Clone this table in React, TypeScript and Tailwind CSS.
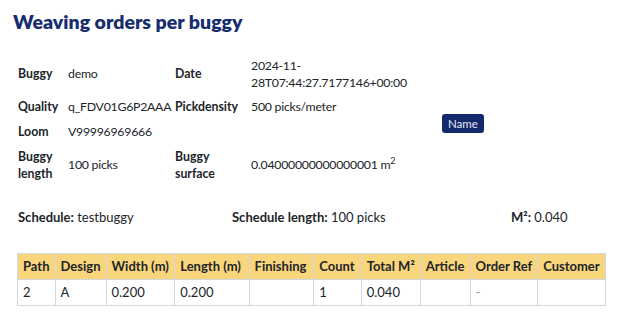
import React from "react";

const cols = [
  { h: "Path", w: 37, v: "2" },
  { h: "Design", w: 51, v: "A" },
  { h: "Width (m)", w: 69, v: "0.200" },
  { h: "Length (m)", w: 76, v: "0.200" },
  { h: "Finishing", w: 66, v: "" },
  { h: "Count", w: 48, v: "1" },
  { h: "Total M²", w: 55, v: "0.040" },
  { h: "Article", w: 50, v: "" },
  { h: "Order Ref", w: 67, v: "-" },
  { h: "Customer", w: 68, v: "" },
];

export default function App() {
  return (
    <div className="w-[619px] h-[325px] bg-white px-[13px] text-[#212529] font-['Lato',sans-serif]">
      <h1 className="pt-[9px] text-[19.5px] leading-[26px] font-extrabold text-[#182d6d]">
        Weaving orders per buggy
      </h1>
      <div className="mt-[18px] ml-[5px] grid grid-cols-[50px_107px_76px_191px_auto] grid-rows-[41px_25px_25px_41px] text-[12.3px] tracking-[-0.25px] leading-[17px]">
        <div className="font-bold tracking-normal self-center">Buggy</div>
        <div className="self-center">demo</div>
        <div className="font-bold tracking-normal self-center">Date</div>
        <div className="self-center">
          2024-11-
          <br />
          28T07:44:27.7177146+00:00
        </div>
        <div />

        <div className="font-bold tracking-normal self-center">Quality</div>
        <div className="self-center">q_FDV01G6P2AAA</div>
        <div className="font-bold tracking-normal self-center">Pickdensity</div>
        <div className="self-center">500 picks/meter</div>
        <div className="row-span-2 self-start mt-[20px]">
          <button className="bg-[#13296b] text-[#e8eaf2] text-[11.5px] tracking-normal leading-[19px] h-[19px] px-[6px] rounded-[3px]">
            Name
          </button>
        </div>

        <div className="font-bold tracking-normal self-center">Loom</div>
        <div className="self-center">V99996969666</div>
        <div className="self-center" />
        <div className="self-center" />

        <div className="font-bold tracking-normal self-center">
          Buggy
          <br />
          length
        </div>
        <div className="self-center">100 picks</div>
        <div className="font-bold tracking-normal self-center">
          Buggy
          <br />
          surface
        </div>
        <div className="self-center">
          0.04000000000000001 m
          <span className="text-[9px] relative -top-[5px]">2</span>
        </div>
        <div />
      </div>

      <div className="mt-[24px] ml-[5px] grid grid-cols-[214px_279px_1fr] text-[13px] leading-[17px]">
        <div>
          <span className="font-bold">Schedule:</span> testbuggy
        </div>
        <div>
          <span className="font-bold">Schedule length:</span> 100 picks
        </div>
        <div>
          <span className="font-bold">M²:</span> 0.040
        </div>
      </div>

      <table className="mt-[27px] ml-[4px] border-collapse text-[13px] leading-[17px]">
        <thead>
          <tr className="bg-[#f9d57b]">
            {cols.map((c) => (
              <th
                key={c.h}
                style={{ width: c.w }}
                className="h-[26px] border border-[#d4d7e3] px-[5px] text-left font-bold whitespace-nowrap"
              >
                {c.h}
              </th>
            ))}
          </tr>
        </thead>
        <tbody>
          <tr>
            {cols.map((c) => (
              <td
                key={c.h}
                className={`h-[26px] border border-[#d4d7e3] px-[5px] text-left ${c.v === "-" ? "text-[#9aa0a8]" : ""}`}
              >
                {c.v}
              </td>
            ))}
          </tr>
        </tbody>
      </table>
    </div>
  );
}
